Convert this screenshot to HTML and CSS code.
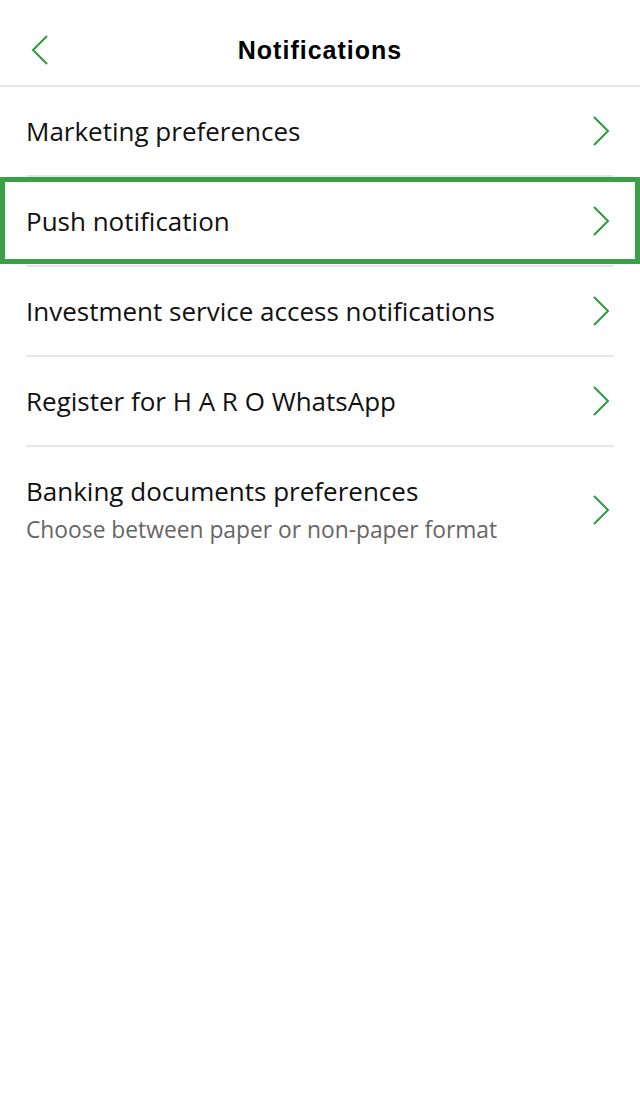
FILE: index.html
```html
<!DOCTYPE html>
<html lang="en">
<head>
    <meta charset="UTF-8">
    <meta name="viewport" content="width=device-width, initial-scale=1.0">
    <title>Notifications</title>
    <link rel="stylesheet" href="styles.css">
</head>
<body>
    <header class="top-bar">
        <button class="back-btn" aria-label="Back">
            <svg width="18" height="30" viewBox="0 0 18 30"><path d="M16 1 L2 15 L16 29" fill="none" stroke="#2e9b3e" stroke-width="2"/></svg>
        </button>
        <h1 class="title">Notifications</h1>
    </header>
    <ul class="menu">
        <li class="menu-item">
            <div class="item-text"><span class="item-label">Marketing preferences</span></div>
            <svg class="chevron" width="18" height="30" viewBox="0 0 18 30"><path d="M2 1 L16 15 L2 29" fill="none" stroke="#2e9b3e" stroke-width="2"/></svg>
        </li>
        <li class="menu-item selected">
            <div class="item-text"><span class="item-label">Push notification</span></div>
            <svg class="chevron" width="18" height="30" viewBox="0 0 18 30"><path d="M2 1 L16 15 L2 29" fill="none" stroke="#2e9b3e" stroke-width="2"/></svg>
        </li>
        <li class="menu-item">
            <div class="item-text"><span class="item-label">Investment service access notifications</span></div>
            <svg class="chevron" width="18" height="30" viewBox="0 0 18 30"><path d="M2 1 L16 15 L2 29" fill="none" stroke="#2e9b3e" stroke-width="2"/></svg>
        </li>
        <li class="menu-item">
            <div class="item-text"><span class="item-label">Register for H A R O WhatsApp</span></div>
            <svg class="chevron" width="18" height="30" viewBox="0 0 18 30"><path d="M2 1 L16 15 L2 29" fill="none" stroke="#2e9b3e" stroke-width="2"/></svg>
        </li>
        <li class="menu-item tall">
            <div class="item-text">
                <span class="item-label">Banking documents preferences</span>
                <span class="item-sub">Choose between paper or non-paper format</span>
            </div>
            <svg class="chevron" width="18" height="30" viewBox="0 0 18 30"><path d="M2 1 L16 15 L2 29" fill="none" stroke="#2e9b3e" stroke-width="2"/></svg>
        </li>
    </ul>
</body>
</html>
```

FILE: styles.css
```css
body {
    margin: 0;
    background: #fff;
    font-family: "Open Sans", "Liberation Sans", sans-serif;
    color: #111;
}
.top-bar {
    position: relative;
    height: 85px;
    border-bottom: 2px solid #e6e6e6;
    display: flex;
    align-items: center;
    justify-content: center;
}
.back-btn {
    position: absolute;
    left: 31px;
    top: 35px;
    padding: 0;
    border: none;
    background: none;
}
.back-btn svg {
    display: block;
}
.title {
    margin: 0;
    padding-top: 16px;
    font-family: "Liberation Sans", Arial, sans-serif;
    font-size: 25px;
    font-weight: 700;
    letter-spacing: 1px;
    color: #000;
}
.menu {
    list-style: none;
    margin: 0;
    padding: 0;
}
.menu-item {
    position: relative;
    height: 88px;
    margin: 0 26px;
    border-bottom: 2px solid #e6e6e6;
    display: flex;
    align-items: center;
    justify-content: space-between;
}
.menu-item.tall {
    height: 125px;
    border-bottom: none;
}
/* highlighted row */
.menu-item.selected::after {
    content: "";
    position: absolute;
    left: -26px;
    right: -26px;
    top: 0;
    bottom: 1px;
    border: 5px solid #3aa048;
    pointer-events: none;
}
.item-text {
    display: flex;
    flex-direction: column;
    gap: 7px;
}
.item-label {
    font-size: 26px;
    line-height: 33px;
    color: #111;
}
.item-sub {
    font-size: 22.8px;
    line-height: 30px;
    color: #666;
}
.chevron {
    margin-right: 4px;
    flex-shrink: 0;
}
```
